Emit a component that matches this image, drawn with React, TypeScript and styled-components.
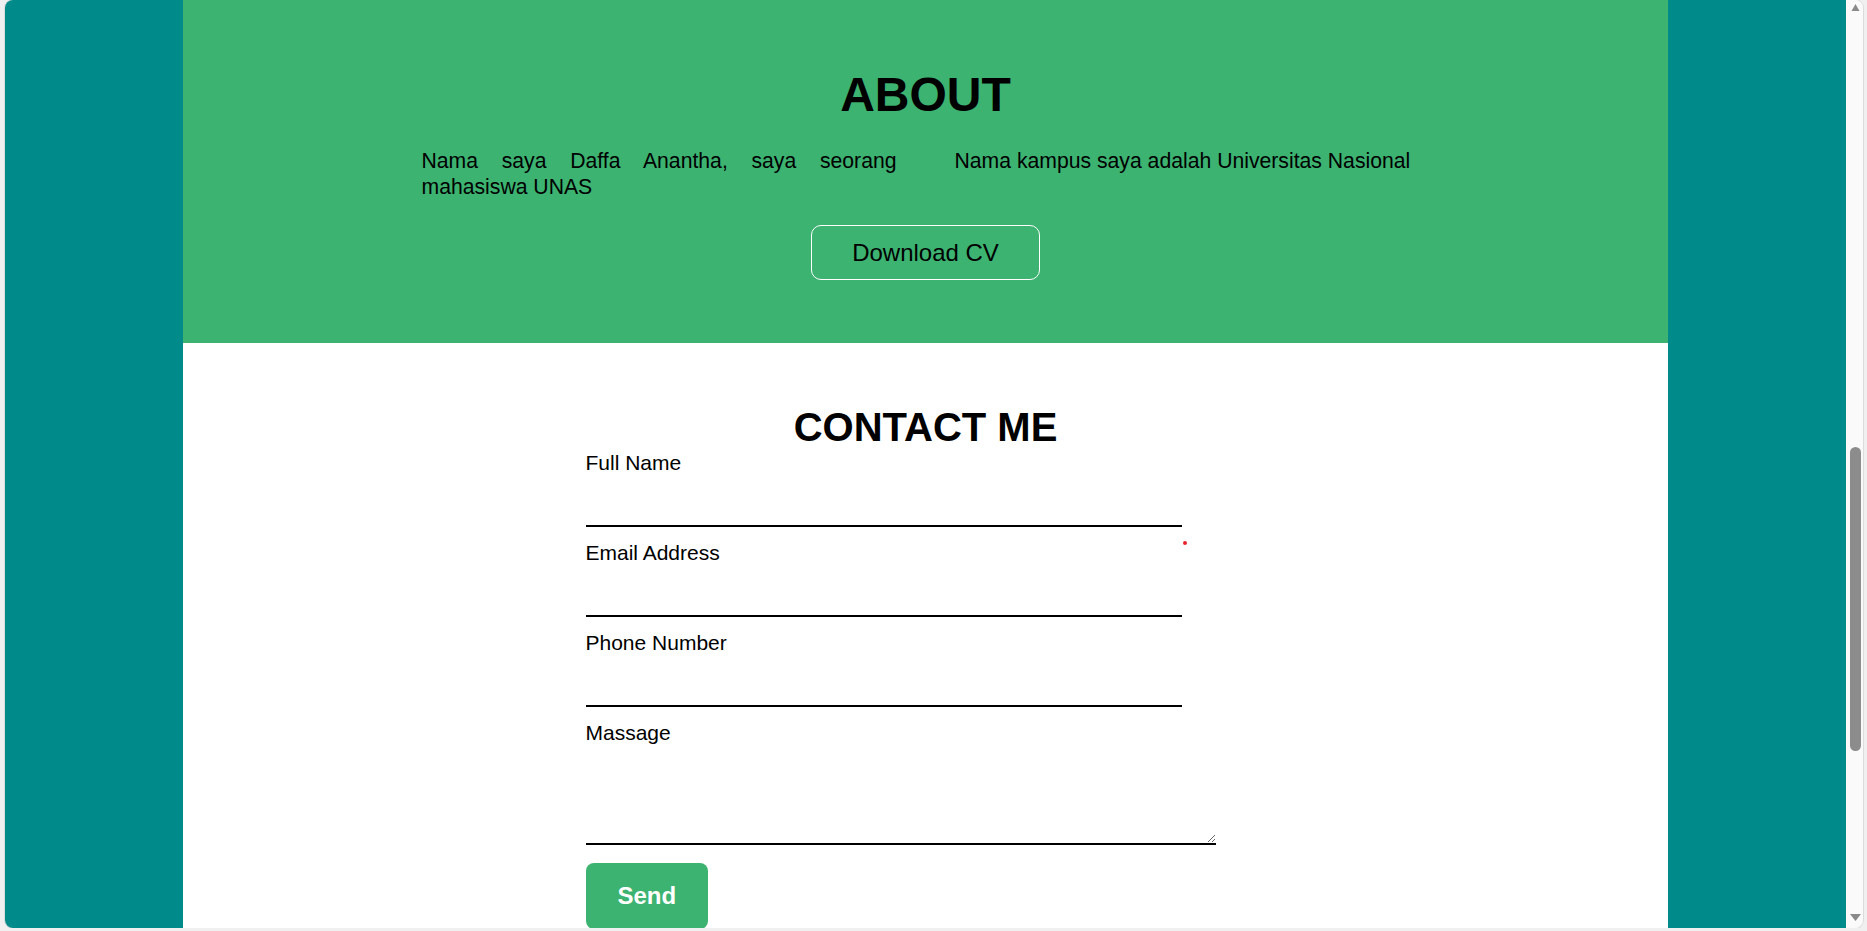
import styled, { createGlobalStyle } from "styled-components";

const GlobalStyle = createGlobalStyle`
  html, body {
    margin: 0;
    padding: 0;
    background: #f0f0f0;
    overflow: hidden;
  }
  body {
    font-family: "Liberation Sans", Arial, sans-serif;
    color: #000;
  }
`;

const Window = styled.div`
  margin-left: 5px;
  width: 1858px;
  height: 928px;
  display: flex;
  border-radius: 8px;
  overflow: hidden;
  box-shadow: 0 0 0 1px #dcdcdc;
`;

const Page = styled.main`
  flex: 1;
  background: #008b8b;
  overflow: hidden;
`;

const Column = styled.div`
  width: 1485px;
  height: 100%;
  margin: 0 auto;
  background: #fff;
`;

const About = styled.section`
  background: #3cb371;
  padding: 67px 0 63px;
  text-align: center;
`;

const Title = styled.h1`
  margin: 0;
  font-size: 48px;
  font-weight: 700;
  line-height: 55px;
`;

const Columns = styled.div`
  width: 1008px;
  margin: 26px auto 0;
  display: grid;
  grid-template-columns: 475px 475px;
  column-gap: 58px;
`;

const Text = styled.p`
  margin: 0;
  font-size: 21.2px;
  line-height: 26px;
  text-align: justify;
`;

const OutlineButton = styled.button`
  margin-top: 25px;
  padding: 13px 40px;
  font-family: inherit;
  font-size: 24px;
  line-height: 27px;
  color: #000;
  background: transparent;
  border: 1px solid #fff;
  border-radius: 10px;
`;

const Contact = styled.section`
  padding-top: 61px;
  text-align: center;
`;

const Subtitle = styled.h2`
  margin: 0 0 1px;
  font-size: 40px;
  font-weight: 700;
  line-height: 46px;
`;

const Form = styled.form`
  width: 680px;
  margin: 0 auto;
  text-align: left;
`;

const Field = styled.div`
  position: relative;
  display: flex;
  flex-direction: column;
  align-items: flex-start;
  margin-bottom: 14px;
`;

const Label = styled.label`
  font-size: 21px;
  line-height: 24px;
`;

const Input = styled.input`
  box-sizing: border-box;
  width: 596px;
  height: 52px;
  border: none;
  border-bottom: 2px solid #000;
  background: transparent;
  font: inherit;
  outline: none;
`;

const TextArea = styled.textarea`
  box-sizing: border-box;
  width: 630px;
  height: 100px;
  border: none;
  border-bottom: 2px solid #000;
  background: transparent;
  font: inherit;
  outline: none;
`;

const Marker = styled.span`
  position: absolute;
  left: 597px;
  top: 90px;
  width: 4px;
  height: 4px;
  border-radius: 50%;
  background: #e8242c;
`;

const SendButton = styled.button`
  margin-top: 4px;
  padding: 19px 32px;
  font-family: inherit;
  font-size: 24px;
  font-weight: 700;
  line-height: 28px;
  color: #fff;
  background: #3cb371;
  border: none;
  border-radius: 8px;
`;

const Scrollbar = styled.div`
  width: 17px;
  background: #fafafa;
  display: flex;
  flex-direction: column;
  align-items: center;
`;

const Arrow = styled.svg`
  display: block;
  width: 17px;
  height: 17px;
  flex: none;
`;

const Track = styled.div`
  flex: 1;
  width: 100%;
  display: flex;
  flex-direction: column;
  align-items: center;
`;

const Thumb = styled.div`
  margin: 430px 0 0 2px;
  width: 11px;
  height: 304px;
  border-radius: 6px;
  background: #8c8c8c;
`;

const fields = ["Full Name", "Email Address", "Phone Number"];

const App = () => {
  return (
    <>
      <GlobalStyle />
      <Window>
        <Page>
          <Column>
            <About>
              <Title>ABOUT</Title>
              <Columns>
                <Text>Nama saya Daffa Anantha, saya seorang mahasiswa UNAS</Text>
                <Text>Nama kampus saya adalah Universitas Nasional</Text>
              </Columns>
              <OutlineButton type="button">Download CV</OutlineButton>
            </About>
            <Contact>
              <Subtitle>CONTACT ME</Subtitle>
              <Form onSubmit={(e) => e.preventDefault()}>
                {fields.map((name, i) => (
                  <Field key={name}>
                    <Label>{name}</Label>
                    <Input type="text" />
                    {i === 0 && <Marker />}
                  </Field>
                ))}
                <Field>
                  <Label>Massage</Label>
                  <TextArea />
                </Field>
                <SendButton type="submit">Send</SendButton>
              </Form>
            </Contact>
          </Column>
        </Page>
        <Scrollbar>
          <Arrow viewBox="0 0 17 17">
            <polygon points="4.5,18 8.5,11 12.5,18" fill="#8a8a8a" transform="translate(1 -7)" />
          </Arrow>
          <Track>
            <Thumb />
          </Track>
          <Arrow viewBox="0 0 17 17">
            <polygon points="4,3 15,3 9.5,10" fill="#8a8a8a" />
          </Arrow>
        </Scrollbar>
      </Window>
    </>
  );
};

export default App;
